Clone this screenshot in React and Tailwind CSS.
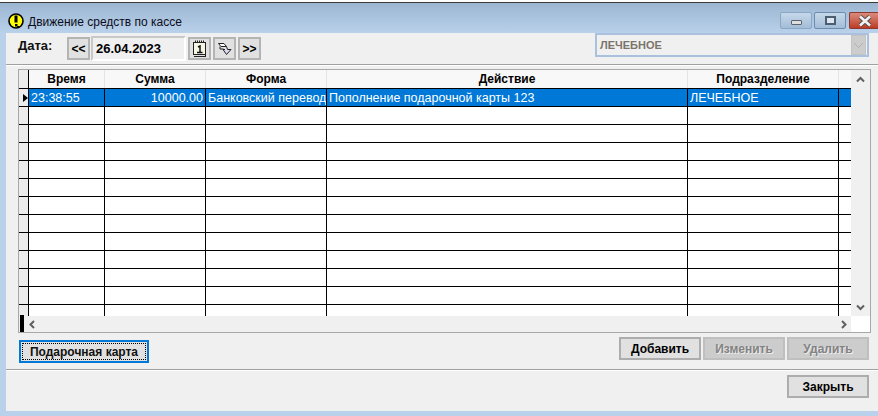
import React from "react";

const cols = ["w-[76px]", "w-[101px]", "w-[121px]", "w-[361px]", "w-[151px]", "w-[12px]"];
const headers = ["Время", "Сумма", "Форма", "Действие", "Подразделение", ""];
const row = ["23:38:55", "10000.00", "Банковский перевод", "Пополнение подарочной карты 123", "ЛЕЧЕБНОЕ", ""];

function Chevron({ d, className = "" }) {
  return (
    <svg width="9" height="9" viewBox="0 0 9 9" className={className}>
      <path d={d} fill="none" stroke="#606060" strokeWidth="2" />
    </svg>
  );
}

function Btn({ children, disabled, className = "" }) {
  return (
    <div className={`h-[23px] flex items-center justify-center border-2 text-[12px] font-bold ${disabled ? "bg-[#cccccc] border-[#bfbfbf] text-[#838383] [text-shadow:1px_1px_0_#ececec]" : "bg-[#e1e1e1] border-[#adadad] text-black"} ${className}`}>
      {children}
    </div>
  );
}

function Square({ children, className = "" }) {
  return (
    <div className={`w-[23px] h-[23px] border-2 border-[#b4b4b4] bg-[#e1e1e1] flex items-center justify-center ${className}`}>
      {children}
    </div>
  );
}

function DataRow({ values, selected, last }) {
  const h = last ? "h-[11px]" : "h-[18px]";
  return (
    <div className={`flex ${h} shrink-0`}>
      <div className={`w-[9px] shrink-0 bg-[#ececec] flex items-center justify-end ${last ? "" : "border-b border-black"}`}>
        {selected && <div className="w-0 h-0 border-y-[4px] border-y-transparent border-l-[5px] border-l-black" />}
      </div>
      <div className="w-px shrink-0 bg-black" />
      {cols.map((c, i) => (
        <div
          key={i}
          className={`${c} shrink-0 overflow-hidden ${i < 5 ? "border-r" : ""} ${last ? "" : "border-b"} border-black text-[12.5px] leading-[17px] pt-px pl-[2px] pr-[2px] whitespace-nowrap ${selected ? "bg-[#0078d7] text-white" : "bg-white"} ${i === 1 ? "text-right" : ""}`}
        >
          {values ? values[i] : ""}
        </div>
      ))}
    </div>
  );
}

export default function App() {
  return (
    <div className="w-[878px] h-[416px] bg-white overflow-hidden font-['Liberation_Sans',Arial,sans-serif] text-black">
      <div className="h-[2px] bg-white" />
      <div className="h-[414px] border-t border-[#3a3a3a] bg-[#b9d1ea] flex flex-col">
        {/* Title bar */}
        <div className="h-[30px] shrink-0 flex items-start bg-gradient-to-b from-[#9cb6d2] to-[#b9d1ea] pl-[8px]">
          <svg width="16" height="16" viewBox="0 0 16 16" className="mt-[10px] shrink-0">
            <circle cx="8" cy="8" r="7" fill="#ffff00" stroke="#000" strokeWidth="1.6" />
            <rect x="6.5" y="2.5" width="3" height="7" fill="#000" />
            <rect x="7" y="11" width="2.5" height="2.5" fill="#000" />
            <rect x="9" y="13" width="2" height="2" fill="#000" />
          </svg>
          <div className="ml-[4px] mt-[12px] text-[12px] leading-[14px] text-[#0c0c20]">Движение средств по кассе</div>
          <div className="ml-auto flex mt-[9px]">
            <div className="w-[32px] h-[17px] rounded-[2px] border border-[#8aa7c6] bg-gradient-to-b from-[#c6d8ea] to-[#a3bdd8] flex items-center justify-center">
              <div className="w-[11px] h-[5px] mt-[4px] border border-[#5c6470] bg-[#dedede] rounded-[1px]" />
            </div>
            <div className="ml-[2px] w-[32px] h-[17px] rounded-[2px] border border-[#6d8cad] bg-gradient-to-b from-[#c6d8ea] to-[#a3bdd8] flex items-center justify-center">
              <div className="w-[11px] h-[9px] border-2 border-[#4d5e70] bg-[#dbe6f2]" />
            </div>
            <div className="ml-[3px] w-[29px] h-[17px] rounded-l-[2px] border border-r-0 border-[#8a3a30] bg-gradient-to-b from-[#d98a7c] to-[#bd3a22] overflow-hidden flex items-center justify-start pl-[7px]">
              <svg width="16" height="12" viewBox="0 0 16 12">
                <path d="M3 1.5 L13 10.5 M13 1.5 L3 10.5" stroke="#4c4c4c" strokeWidth="4.4" />
                <path d="M3 1.5 L13 10.5 M13 1.5 L3 10.5" stroke="#f2f2f2" strokeWidth="2.6" />
              </svg>
            </div>
          </div>
        </div>

        {/* Client */}
        <div className="ml-[6px] h-[378px] shrink-0 bg-[#f0f0f0] flex flex-col">
          {/* Toolbar */}
          <div className="h-[31px] shrink-0 flex items-start pl-[12px] pr-[9px] pt-[4px]">
            <div className="w-[49px] text-[13px] font-bold leading-[20px] -mt-px text-[#111]">Дата:</div>
            <Square className="text-[12px] font-bold">{"<<"}</Square>
            <div className="ml-[1px] w-[95px] h-[25px] -mt-px border-2 border-[#c8c8c8] border-b-white border-r-white bg-[#f0f0f0] text-[13px] font-bold leading-[21px] pl-[3px]">26.04.2023</div>
            <Square className="ml-[2px]">
              <svg width="15" height="19" viewBox="0 0 15 19">
                <rect x="1.5" y="3.5" width="12" height="12" fill="#f6f6e4" stroke="#222" />
                <path d="M2 17.5 H14 M13.5 16 V17" stroke="#222" />
                <path d="M3.5 1.5 V4 M5.5 1.5 V4 M7.5 1.5 V4 M9.5 1.5 V4 M11.5 1.5 V4" stroke="#222" />
                <path d="M6 8 L8 7 V13 M5 13.5 H10.5" stroke="#111" strokeWidth="1.5" fill="none" />
              </svg>
            </Square>
            <Square className="ml-[2px]">
              <svg width="16" height="14" viewBox="0 0 16 14">
                <path d="M1.5 1.5 H7 L9.5 4.5 H4 Z" fill="#fff" stroke="#222" />
                <path d="M3 4.5 V7 H6.5" fill="none" stroke="#222" />
                <path d="M9.5 4.5 L10.5 7.5 H14 L9.5 12.5 L6 7.5 H8" fill="#dcdcee" stroke="#222" />
              </svg>
            </Square>
            <Square className="text-[12px] font-bold ml-[2px]">{">>"}</Square>
            <div className="ml-auto w-[274px] h-[24px] -mt-[4px] border-2 border-[#a9c1dc] bg-[#f0f0f0] flex items-center text-[11px] font-bold text-[#7a756c] pl-[3px]">
              ЛЕЧЕБНОЕ
              <div className="ml-auto mr-[1px] w-[15px] h-[20px] bg-[#cccccc] border border-[#c4c4c4] flex items-center justify-center">
                <svg width="11" height="7" viewBox="0 0 11 7"><path d="M1 1 L5.5 5.5 L10 1" fill="none" stroke="#b0b0b0" strokeWidth="1" /></svg>
              </div>
            </div>
          </div>

          <div className="h-[2px] shrink-0 bg-[#a0a0a0] border-b border-white" />

          {/* Grid */}
          <div className="mt-[3px] ml-[12px] w-[853px] h-[264px] shrink-0 border border-[#a8a8a8] bg-white flex">
            <div className="w-[832px] shrink-0 flex flex-col">
              <div className="flex h-[19px] shrink-0 border-b border-black bg-[#f8f8f8]">
                <div className="w-[10px] shrink-0 bg-[#ececec] border-r border-black" />
                {cols.map((c, i) => (
                  <div key={i} className={`${c} shrink-0 ${i < 5 ? "border-r border-[#e4e4e4]" : ""} text-[12px] font-bold text-center leading-[17px] pt-px`}>{headers[i]}</div>
                ))}
              </div>
              <DataRow values={row} selected />
              {Array.from({ length: 11 }).map((_, i) => <DataRow key={i} />)}
              <DataRow last />
              <div className="h-[16px] shrink-0 bg-[#f0f0f0] flex items-center relative">
                <div className="absolute left-[1px] -top-px w-[4px] h-[17px] bg-black" />
                <Chevron d="M6 1 L2.5 4.5 L6 8" className="ml-[9px]" />
                <Chevron d="M3 1 L6.5 4.5 L3 8" className="ml-auto mr-[3px]" />
              </div>
            </div>
            <div className="w-[19px] shrink-0 h-[246px] bg-[#f0f0f0] flex flex-col items-center justify-between pt-[5px] pb-[4px]">
              <Chevron d="M1 6.5 L4.5 3 L8 6.5" />
              <Chevron d="M1 2.5 L4.5 6 L8 2.5" />
            </div>
          </div>

          {/* Actions */}
          <div className="flex shrink-0 pl-[13px] pr-[9px] pt-[4px] h-[36px] items-start">
            <div className="mt-[3px] w-[130px] h-[23px] border-2 border-[#0078d7] bg-[#e1e1e1] p-px">
              <div className="h-full border border-dotted border-black flex items-center justify-center text-[12px] font-bold text-[#111]">Подарочная карта</div>
            </div>
            <div className="ml-auto flex gap-[2px]">
              <Btn className="w-[82px]">Добавить</Btn>
              <Btn disabled className="w-[82px]">Изменить</Btn>
              <Btn disabled className="w-[82px]">Удалить</Btn>
            </div>
          </div>

          <div className="h-[2px] shrink-0 bg-[#a0a0a0] border-b border-white" />

          <div className="flex justify-end pr-[9px] pt-[4px]">
            <Btn className="w-[82px]">Закрыть</Btn>
          </div>
        </div>
      </div>
    </div>
  );
}
